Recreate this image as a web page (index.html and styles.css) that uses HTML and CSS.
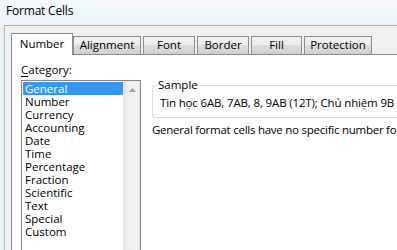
FILE: index.html
```html
<!DOCTYPE html>
<html>
<head>
<meta charset="utf-8">
<link rel="stylesheet" href="styles.css">
</head>
<body>
<div class="titlebar">Format Cells</div>
<div class="dialog">
  <div class="tabs">
    <div class="tab active w-number">Number</div>
    <div class="tab w-align">Alignment</div>
    <div class="tab w-font">Font</div>
    <div class="tab w-border">Border</div>
    <div class="tab w-fill">Fill</div>
    <div class="tab w-prot">Protection</div>
  </div>
  <div class="page">
    <div class="left">
      <div class="label"><u>C</u>ategory:</div>
      <div class="listbox">
        <ul class="items">
          <li class="sel">General</li>
          <li>Number</li>
          <li>Currency</li>
          <li>Accounting</li>
          <li>Date</li>
          <li>Time</li>
          <li>Percentage</li>
          <li>Fraction</li>
          <li>Scientific</li>
          <li>Text</li>
          <li>Special</li>
          <li>Custom</li>
        </ul>
        <div class="scrollbar">
          <div class="arrow">
            <svg width="7" height="4" viewBox="0 0 7 4"><path d="M0 4 L3.5 0 L7 4 Z" fill="#a0a0a0"/></svg>
          </div>
        </div>
      </div>
    </div>
    <div class="right">
      <fieldset class="sample">
        <legend>Sample</legend>
        <div class="sample-text">Tin học 6AB, 7AB, 8, 9AB (12T); Chủ nhiệm 9B (4T)</div>
      </fieldset>
      <div class="desc">General format cells have no specific number format.</div>
    </div>
  </div>
</div>
</body>
</html>
```

FILE: styles.css
```css
html, body {
  margin: 0;
  padding: 0;
}
body {
  width: 397px;
  height: 250px;
  overflow: hidden;
  font-family: "Open Sans", "Noto Sans", sans-serif;
  font-size: 11.5px;
  color: #000;
  background: #eaf2f8;
}
.titlebar {
  height: 25px;
  box-sizing: border-box;
  padding: 3px 0 0 6px;
  font-size: 12px;
  line-height: 16px;
  letter-spacing: -0.2px;
  color: #000;
  background: linear-gradient(#f4f9fc, #eaf3f9);
}
.dialog {
  margin-left: 4px;
  border-top: 1px solid #a9aeb3;
  border-left: 1px solid #b5b9bd;
  background: #f0f0f0;
  height: 225px;
  box-sizing: border-box;
  padding: 7px 0 0 6px;
}
.tabs {
  display: flex;
  align-items: flex-end;
  height: 21px;
  position: relative;
  z-index: 2;
}
.tab {
  box-sizing: border-box;
  height: 18px;
  border: 1px solid #898c95;
  border-bottom: none;
  background: linear-gradient(#f3f3f3 0%, #ebebeb 45%, #dddddd 50%, #cfcfcf 100%);
  text-align: center;
  line-height: 16px;
  margin-left: 2px;
  white-space: nowrap;
}
.tab.active {
  height: 22px;
  margin-bottom: -1px;
  margin-left: 0;
  margin-right: -2px;
  background: #fff;
  line-height: 20px;
  position: relative;
  z-index: 3;
}
.w-number { width: 62px; }
.w-align { width: 68px; }
.w-font { width: 52px; }
.w-border { width: 52px; }
.w-fill { width: 51px; }
.w-prot { width: 68px; }
.page {
  border: 1px solid #898c95;
  border-right: none;
  background: #fff;
  height: 200px;
  display: flex;
  box-sizing: border-box;
  padding: 7px 0 0 9px;
}
.left {
  width: 120px;
  flex: none;
}
.label {
  line-height: 16px;
  height: 18px;
}
.label u {
  text-decoration-thickness: 1px;
  text-underline-offset: 2px;
}
.listbox {
  box-sizing: border-box;
  width: 120px;
  height: 180px;
  border: 1px solid #828790;
  display: flex;
  background: #fff;
}
.items {
  list-style: none;
  margin: 0;
  padding: 1px 0 0 1px;
  flex: 1;
}
.items li {
  height: 13px;
  line-height: 13px;
  padding-left: 2px;
}
.items li.sel {
  background: #3399ff;
  color: #fff;
}
.scrollbar {
  width: 17px;
  flex: none;
  background: linear-gradient(90deg, #e3e3e3 0%, #efefef 20%, #f2f2f2 80%, #e6e6e6 100%);
  border-left: 1px solid #ececec;
  box-sizing: border-box;
}
.arrow {
  height: 17px;
  display: flex;
  align-items: center;
  justify-content: center;
}
.right {
  flex: 1;
  padding-left: 11px;
  padding-top: 16px;
  min-width: 0;
}
.sample {
  margin: 0;
  border: 1px solid #d5dfe5;
  border-radius: 3px;
  border-right: none;
  padding: 0 0 5px 7px;
  height: 40px;
  box-sizing: border-box;
  white-space: nowrap;
  overflow: hidden;
}
.sample legend {
  padding: 0 1px;
  margin-left: -3px;
  line-height: 14px;
}
.sample-text {
  line-height: 16px;
  margin-top: 3px;
  letter-spacing: -0.15px;
}
.desc {
  margin-top: 4px;
  white-space: nowrap;
  line-height: 16px;
  letter-spacing: -0.25px;
}
```
